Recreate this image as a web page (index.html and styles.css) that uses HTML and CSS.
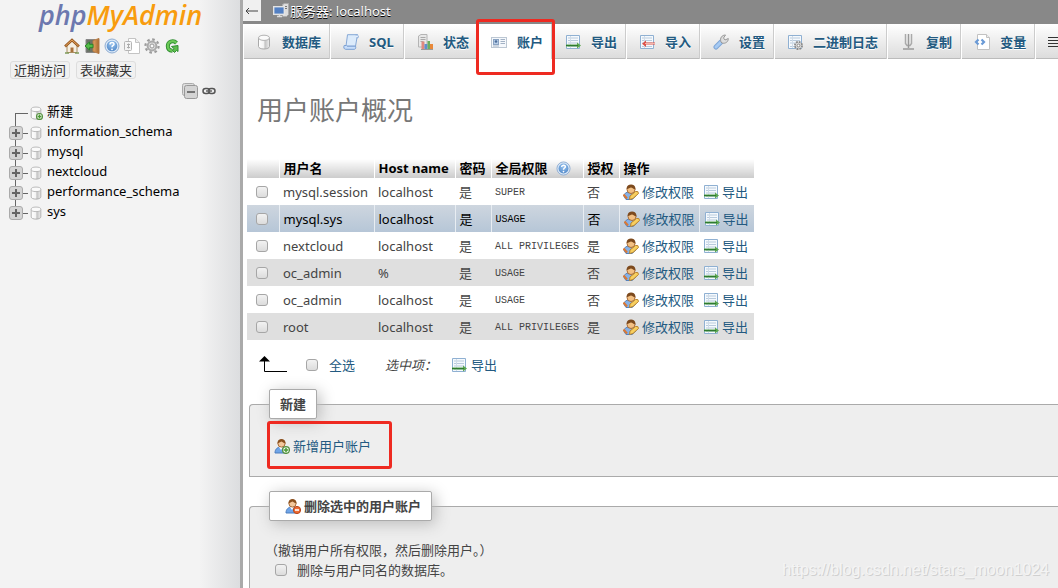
FILE: index.html
```html
<!DOCTYPE html>
<html lang="zh-CN">
<head>
<meta charset="utf-8">
<title>localhost | phpMyAdmin</title>
<link rel="stylesheet" href="styles.css">
</head>
<body>
<svg class="sprite" aria-hidden="true">
  <defs>
    <linearGradient id="cyl" x1="0" x2="1" y1="0" y2="0"><stop offset="0" stop-color="#fff"/><stop offset=".45" stop-color="#f4f4f4"/><stop offset=".6" stop-color="#c4c4c4"/><stop offset="1" stop-color="#eee"/></linearGradient>
    <linearGradient id="wood" x1="0" x2="1" y1="0" y2="0"><stop offset="0" stop-color="#e2a565"/><stop offset="1" stop-color="#a8682f"/></linearGradient>
    <radialGradient id="ball" cx=".5" cy=".3" r=".8"><stop offset="0" stop-color="#9cc6f0"/><stop offset="1" stop-color="#4a82c4"/></radialGradient>
  </defs>
  <symbol id="db" viewBox="0 0 16 16">
    <path d="M2.500 4v8.500c0 1.400 2.400 2.500 5.500 2.500s5.500-1.100 5.500-2.500V4z" fill="url(#cyl)" stroke="#aaa"/>
    <ellipse cx="8" cy="3.800" rx="5.500" ry="2.600" fill="#fafafa" stroke="#b2b2b2"/>
  </symbol>
  <symbol id="add" viewBox="0 0 16 16">
    <circle cx="12" cy="12" r="3.400" fill="#f2faee" stroke="#55903f" stroke-width="1.300"/><path d="M12 9.800v4.400M9.800 12h4.400" stroke="#4b9a35" stroke-width="1.500"/>
  </symbol>
  <symbol id="home" viewBox="0 0 16 16">
    <path d="M3 8v6.500h10V8L8 3z" fill="#f5efe2" stroke="#a98c60"/>
    <path d="M1 8.500 8 2l7 6.500" fill="none" stroke="#9b5c24" stroke-width="2.600"/><path d="M1.500 8 8 2l6.500 6" fill="none" stroke="#e3a45d"/>
    <path d="M6.500 14V9.500h3V14" fill="#a8713c"/><path d="M1 15h4M11 15h4" stroke="#7d9b5a" stroke-width="1.500"/>
  </symbol>
  <symbol id="exit" viewBox="0 0 16 16">
    <path d="M2 1.500h9v13H2z" fill="#6b7268" stroke="#888"/><path d="M9 2.500 15 .5v15l-6-2z" fill="url(#wood)" stroke="#b37a45"/>
    <path d="M1 8l4.500-4v2.300H9v3.400H5.500V12z" fill="#54bd48" stroke="#2b842a"/>
  </symbol>
  <symbol id="help" viewBox="0 0 16 16">
    <circle cx="8" cy="8" r="7" fill="#dce9f7" stroke="#8fadd2"/><circle cx="8" cy="8" r="5.300" fill="url(#ball)"/>
    <path d="M6 6.500c0-2.500 4-2.500 4-.3C10 7.500 8 7.500 8 9.200" fill="none" stroke="#fff" stroke-width="1.500"/><circle cx="8" cy="11.300" r=".9" fill="#fff"/>
  </symbol>
  <symbol id="doc" viewBox="0 0 16 16">
    <path d="M4.500.5h7l4 4v11h-11z" fill="#fff" stroke="#c4c4c4"/><path d="M11.500.5v4h4" fill="#eee" stroke="#c4c4c4"/>
    <rect x=".5" y="3.500" width="7" height="9" rx="1" fill="#f4f4f4" stroke="#b5b5b5"/><path d="M4.500 5.500v5M3 6.500h3M3 9.500h3" stroke="#aaa"/>
  </symbol>
  <symbol id="gear" viewBox="0 0 16 16">
    <circle cx="8" cy="8" r="6.600" fill="none" stroke="#9b9b9b" stroke-width="2.200" stroke-dasharray="2.600 2.580"/>
    <circle cx="8" cy="8" r="4.400" fill="#ddd" stroke="#aaa" stroke-width="2"/><circle cx="8" cy="8" r="2" fill="#fafafa" stroke="#999"/>
  </symbol>
  <symbol id="reload" viewBox="0 0 16 16">
    <path d="M12.500 5C9 1.500 3.800 3.700 3.800 8c0 3.200 2.200 4.600 4.700 4.800" fill="none" stroke="#2f8d31" stroke-width="4"/>
    <path d="M12.500 5C9 1.500 3.800 3.700 3.800 8c0 3.200 2.200 4.600 4.700 4.800" fill="none" stroke="#6bc956" stroke-width="2.200"/>
    <path d="M14 7.500 7.500 8.500l2.500 2-1.500 2 2 2 2-2 1.500 1z" fill="#5dbd4e" stroke="#2f8d31"/>
  </symbol>
  <symbol id="collapse" viewBox="0 0 16 16">
    <rect x=".5" y=".5" width="12" height="12" rx="2" fill="#ddd" stroke="#aaa"/><rect x="2.500" y="2.500" width="13" height="13" rx="2" fill="#d4d4d4" stroke="#999"/><path d="M5 9h8" stroke="#555" stroke-width="1.500"/>
  </symbol>
  <symbol id="chain" viewBox="0 0 16 16">
    <rect x="2" y="5.500" width="6.500" height="5" rx="2.500" fill="none" stroke="#555" stroke-width="1.500"/><rect x="7.500" y="5.500" width="6.500" height="5" rx="2.500" fill="none" stroke="#555" stroke-width="1.500"/><path d="M5 8h6" stroke="#666" stroke-width="1.500"/>
  </symbol>
  <symbol id="plus" viewBox="0 0 14 14">
    <rect x=".5" y=".5" width="13" height="13" rx="2.500" fill="#d4d4d4" stroke="#aaa"/><path d="M7 3v8M3 7h8" stroke="#666" stroke-width="2"/>
  </symbol>
  <symbol id="server" viewBox="0 0 16 16">
    <path d="M9.500 1.500l2-1h4v11l-2 2h-4z" fill="#ddd" stroke="#aaa"/><path d="M11 3.500h3M11 5.500h3" stroke="#777"/>
    <rect x=".7" y="3.700" width="10.600" height="7.600" fill="#5380c3" stroke="#e3e3e3" stroke-width="1.400"/><path d="M4 13.500h5M6.500 11v3" stroke="#ddd" stroke-width="1.500"/>
  </symbol>
  <symbol id="sql" viewBox="0 0 16 16">
    <path d="M4.500.7h10l-2 11.500H3z" fill="#dcebfb" stroke="#86a8d6"/><path d="M3.500 11.500H1.200c-1 2 0 3.800 1.500 3.800h8.600c1.300 0 1.800-1.600 1.200-3.100H4" fill="#c8defa" stroke="#7a9fd2"/>
    <path d="M12.500 1h2c1.200.6 1 2.300.5 2.800h-1.500" fill="#eaf3ff" stroke="#86a8d6"/>
  </symbol>
  <symbol id="status" viewBox="0 0 16 16">
    <path d="M1.500 2 4 .5h6V13H1.500z" fill="#e8e8e8" stroke="#b4b4b4"/><path d="M3.500 3.500h5M3.500 5.500h5M3.500 7.500h3" stroke="#aaa"/>
    <path d="M4.500 7.500h3V15h-3z" fill="#e0887f"/><path d="M7.500 10h3v5h-3z" fill="#5f8fd0"/><path d="M10.500 7h2.500v8h-2.500z" fill="#6cae62"/><path d="M13 10h3v5h-3z" fill="#e8893a"/><path d="M4 15.500h12" stroke="#999"/>
  </symbol>
  <symbol id="card" viewBox="0 0 16 16">
    <rect x=".5" y="3.500" width="15" height="10" fill="#f5f8fc" stroke="#bcc7d3"/><rect x="2.500" y="5.500" width="5" height="5" fill="#b9cee8" stroke="#8aa3c2"/><circle cx="5" cy="7.500" r="1.300" fill="#4c6d99"/><path d="M9.500 5.500H14M9.500 7.500H14M9.500 9.500H14M2 12h6" stroke="#a3b2c5"/>
  </symbol>
  <symbol id="sheet" viewBox="0 0 16 16">
    <path d="M1.500 1.500h13v13h-13z" fill="#f5f9fd" stroke="#8fb0d2"/><path d="M3 4h10M3 6.500h10M3 9h10M3 12.500h10" stroke="#b9cbdd"/><path d="M5.500 2v12" stroke="#d0dce8"/>
  </symbol>
  <symbol id="export" viewBox="0 0 16 16">
    <use href="#sheet"/><path d="M1 10.500h11V8.500l4 3-4 3v-2H1z" fill="#5aa64f"/><path d="M1 11.500h12" stroke="#2f7a30"/>
  </symbol>
  <symbol id="import" viewBox="0 0 16 16">
    <use href="#sheet"/><path d="M16 8.500H7V6.500L3 9.700l4 3.200v-2.400h9z" fill="#dc5148"/><path d="M6 9.500h10" stroke="#f6b4a9"/>
  </symbol>
  <symbol id="wrench" viewBox="0 0 16 16">
    <path d="M3 13 8 8" stroke="#7ea5d6" stroke-width="5" stroke-linecap="round"/><path d="M3 13 8 8" stroke="#a6caf3" stroke-width="3" stroke-linecap="round"/>
    <path d="M8 8C6.500 4 9 1 12.500 1l-2 3L12 6l3.300-1.500C15.500 8 12 10 9 9z" fill="#ddd" stroke="#999"/>
  </symbol>
  <symbol id="binlog" viewBox="0 0 16 16">
    <use href="#sheet"/><circle cx="11.500" cy="11.500" r="3.600" fill="#ddd" stroke="#888" stroke-width="1.800" stroke-dasharray="1.800 1"/><circle cx="11.500" cy="11.500" r="1.400" fill="#fff" stroke="#888"/>
  </symbol>
  <symbol id="repl" viewBox="0 0 16 16">
    <path d="M5.500 0v9.500l1.500 2h3l1.500-2V0" fill="none" stroke="#aaa" stroke-width="1.500"/><path d="M8.500 0v14" stroke="#999" stroke-width="1.500"/><path d="M3 15h11" stroke="#999" stroke-width="1.500"/>
  </symbol>
  <symbol id="vars" viewBox="0 0 16 16">
    <path d="M3.500.5h9l3 3v12h-12z" fill="#fff" stroke="#c2c2c2"/><path d="M12.500.5v3h3" fill="#eee" stroke="#c2c2c2"/><path d="M4.500 5.500 2 8l2.500 2.500M7.500 5.500 10 8l-2.500 2.500" fill="none" stroke="#6a9ad6" stroke-width="2.200"/>
  </symbol>
  <symbol id="charset" viewBox="0 0 16 16"><path d="M0 3.500h15M0 6.500h15M0 9.500h15M0 12.500h15" stroke="#333"/></symbol>
  <symbol id="user" viewBox="0 0 16 16">
    <path d="M1 15c0-4 2.500-6 6-6s6 2 6 6z" fill="#6fa5e8" stroke="#4c7cbd"/><path d="M5 9l2 3 2-3z" fill="#fff"/>
    <circle cx="7.500" cy="5.500" r="3.600" fill="#f3c79b" stroke="#a96c37"/><path d="M3.500 5.500C3-.5 12-.5 11.500 5.500 9 5 8 3.500 7.500 3.500S5 5 3.500 5.500z" fill="#8b501e"/>
  </symbol>
  <symbol id="useredit" viewBox="0 0 16 16">
    <path d="M1 12.500C1 9.500 3 8 6 8s6 1 7 4l-4 3.500H3z" fill="#86b1e6" stroke="#5683bd"/>
    <circle cx="8" cy="5.500" r="4" fill="#f3c083" stroke="#a96c37"/><path d="M3.500 5C3.500-1 13-1 12.500 5.500 10 5 9 3.500 8 3.500S5.500 5 3.500 5z" fill="#7d4a1e"/>
    <path d="M6.500 15.500l.5-3.500 5.500-4.500q3-1 3 2L10 14.500z" fill="#f8cf5e" stroke="#b9832f"/><path d="M.5 10.500l3.500 4" stroke="#d97835" stroke-width="2"/>
  </symbol>
  <symbol id="useradd" viewBox="0 0 16 16"><use href="#user"/><use href="#add"/></symbol>
  <symbol id="userdel" viewBox="0 0 16 16"><use href="#user"/><circle cx="12" cy="12" r="3.600" fill="#ed6c36" stroke="#b94518"/><path d="M10 12h4" stroke="#fff" stroke-width="1.600"/></symbol>
</svg>

<div class="shell">
  <aside class="nav">
    <a class="logo" href="#"><span class="logo-php">php</span><span class="logo-my">MyAdmin</span></a>
    <div class="quick">
      <a href="#" aria-label="主页"><svg class="icon"><use href="#home"/></svg></a>
      <a href="#" aria-label="退出"><svg class="icon"><use href="#exit"/></svg></a>
      <a href="#" aria-label="文档"><svg class="icon"><use href="#help"/></svg></a>
      <a href="#" aria-label="手册"><svg class="icon"><use href="#doc"/></svg></a>
      <a href="#" aria-label="设置"><svg class="icon"><use href="#gear"/></svg></a>
      <a href="#" aria-label="刷新"><svg class="icon"><use href="#reload"/></svg></a>
    </div>
    <div class="recent">
      <button type="button">近期访问</button>
      <button type="button">表收藏夹</button>
    </div>
    <div class="tree-tools">
      <a href="#" aria-label="全部折叠"><svg class="icon"><use href="#collapse"/></svg></a>
      <a href="#" aria-label="链接"><svg class="icon"><use href="#chain"/></svg></a>
    </div>
    <ul class="tree">
      <li class="first"><span class="node"></span><svg class="icon"><use href="#db"/><use href="#add"/></svg><a href="#">新建</a></li>
      <li><span class="node"><svg class="plus"><use href="#plus"/></svg></span><svg class="icon"><use href="#db"/></svg><a href="#">information_schema</a></li>
      <li><span class="node"><svg class="plus"><use href="#plus"/></svg></span><svg class="icon"><use href="#db"/></svg><a href="#">mysql</a></li>
      <li><span class="node"><svg class="plus"><use href="#plus"/></svg></span><svg class="icon"><use href="#db"/></svg><a href="#">nextcloud</a></li>
      <li><span class="node"><svg class="plus"><use href="#plus"/></svg></span><svg class="icon"><use href="#db"/></svg><a href="#">performance_schema</a></li>
      <li><span class="node"><svg class="plus"><use href="#plus"/></svg></span><svg class="icon"><use href="#db"/></svg><a href="#">sys</a></li>
    </ul>
  </aside>

  <main class="main">
    <header class="server">
      <button class="toggle" type="button" aria-label="隐藏面板"><svg class="back" viewBox="0 0 14 8"><path d="M1 4h12M4 1 1 4l3 3" fill="none" stroke="#444"/></svg></button>
      <a href="#"><svg class="icon"><use href="#server"/></svg>服务器: localhost</a>
    </header>
    <nav class="tabs">
      <a href="#"><svg class="icon"><use href="#db"/></svg>数据库</a>
      <a href="#"><svg class="icon"><use href="#sql"/></svg>SQL</a>
      <a href="#"><svg class="icon"><use href="#status"/></svg>状态</a>
      <a href="#" class="active"><svg class="icon"><use href="#card"/></svg>账户<span class="mark mark-tab"></span></a>
      <a href="#"><svg class="icon"><use href="#export"/></svg>导出</a>
      <a href="#"><svg class="icon"><use href="#import"/></svg>导入</a>
      <a href="#"><svg class="icon"><use href="#wrench"/></svg>设置</a>
      <a href="#"><svg class="icon"><use href="#binlog"/></svg>二进制日志</a>
      <a href="#"><svg class="icon"><use href="#repl"/></svg>复制</a>
      <a href="#"><svg class="icon"><use href="#vars"/></svg>变量</a>
      <a href="#" aria-label="字符集"><svg class="icon"><use href="#charset"/></svg></a>
    </nav>

    <div class="content">
      <h2>用户账户概况</h2>
      <table class="users">
        <colgroup><col class="c-check"><col class="c-user"><col class="c-host"><col class="c-short"><col class="c-priv"><col class="c-short"><col class="c-edit"><col class="c-export"></colgroup>
        <thead>
          <tr><th></th><th>用户名</th><th>Host name</th><th>密码</th><th><span class="with-help">全局权限<svg class="icon"><use href="#help"/></svg></span></th><th>授权</th><th colspan="2">操作</th></tr>
        </thead>
        <tbody>
          <tr><td><input type="checkbox" aria-label="mysql.session"></td><td>mysql.session</td><td>localhost</td><td>是</td><td><code>SUPER</code></td><td>否</td><td><a href="#"><svg class="icon"><use href="#useredit"/></svg>修改权限</a></td><td><a href="#"><svg class="icon"><use href="#export"/></svg>导出</a></td></tr>
          <tr class="hover"><td><input type="checkbox" aria-label="mysql.sys"></td><td>mysql.sys</td><td>localhost</td><td>是</td><td><code>USAGE</code></td><td>否</td><td><a href="#"><svg class="icon"><use href="#useredit"/></svg>修改权限</a></td><td><a href="#"><svg class="icon"><use href="#export"/></svg>导出</a></td></tr>
          <tr><td><input type="checkbox" aria-label="nextcloud"></td><td>nextcloud</td><td>localhost</td><td>是</td><td><code>ALL PRIVILEGES</code></td><td>是</td><td><a href="#"><svg class="icon"><use href="#useredit"/></svg>修改权限</a></td><td><a href="#"><svg class="icon"><use href="#export"/></svg>导出</a></td></tr>
          <tr class="even"><td><input type="checkbox" aria-label="oc_admin %"></td><td>oc_admin</td><td>%</td><td>是</td><td><code>USAGE</code></td><td>否</td><td><a href="#"><svg class="icon"><use href="#useredit"/></svg>修改权限</a></td><td><a href="#"><svg class="icon"><use href="#export"/></svg>导出</a></td></tr>
          <tr><td><input type="checkbox" aria-label="oc_admin localhost"></td><td>oc_admin</td><td>localhost</td><td>是</td><td><code>USAGE</code></td><td>否</td><td><a href="#"><svg class="icon"><use href="#useredit"/></svg>修改权限</a></td><td><a href="#"><svg class="icon"><use href="#export"/></svg>导出</a></td></tr>
          <tr class="even"><td><input type="checkbox" aria-label="root"></td><td>root</td><td>localhost</td><td>是</td><td><code>ALL PRIVILEGES</code></td><td>是</td><td><a href="#"><svg class="icon"><use href="#useredit"/></svg>修改权限</a></td><td><a href="#"><svg class="icon"><use href="#export"/></svg>导出</a></td></tr>
        </tbody>
      </table>

      <div class="bulk">
        <svg class="arrow" viewBox="0 0 28 18"><path d="M5.500 3v12.500H28" fill="none" stroke="#000"/><path d="M0 5.500 5.500 0 11 5.500z"/></svg>
        <input type="checkbox" id="all"><label for="all">全选</label>
        <em>选中项：</em>
        <button type="button"><svg class="icon"><use href="#export"/></svg>导出</button>
      </div>

      <fieldset class="box box-new">
        <legend>新建</legend>
        <a class="add-link" href="#"><svg class="icon"><use href="#useradd"/></svg>新增用户账户<span class="mark mark-add"></span></a>
      </fieldset>

      <fieldset class="box box-drop">
        <legend class="with-icon"><svg class="icon"><use href="#userdel"/></svg>删除选中的用户账户</legend>
        <p>（撤销用户所有权限，然后删除用户。）</p>
        <div class="drop-db"><input type="checkbox" id="dropdb"><label for="dropdb">删除与用户同名的数据库。</label></div>
      </fieldset>
    </div>
  </main>
  <span class="watermark">https://blog.csdn.net/stars_moon1024</span>
</div>
</body>
</html>
```

FILE: styles.css
```css
* { box-sizing: border-box; }
body {
  margin: 0;
  font: 13px/20px "Noto Sans", "Noto Sans CJK SC", sans-serif;
  color: #444;
  background: #fff;
}
a { color: #235a81; text-decoration: none; }
button { font: inherit; cursor: pointer; }
.sprite { position: absolute; width: 0; height: 0; }
.icon { display: block; flex: none; width: 16px; height: 16px; }
.shell { position: relative; display: flex; height: 100vh; overflow: hidden; }

input[type="checkbox"] {
  appearance: none;
  display: block;
  flex: none;
  width: 12px;
  height: 12px;
  margin: 0;
  border: 1px solid #a6a6a6;
  border-radius: 3px;
  background: linear-gradient(#f2f2f2, #dcdcdc);
}

/* navigation panel */
.nav {
  flex: none;
  width: 243px;
  border-right: 3px solid #aaa;
  background: linear-gradient(to right, #f3f3f3 200px, #dcdddf 240px);
}
.logo {
  display: block;
  height: 38px;
  padding-left: 39px;
  font: italic 600 27px/30px "Open Sans", sans-serif;
}
.logo-php { color: #6c78af; }
.logo-my { color: #f89c0e; }
.quick { display: flex; gap: 4px; padding-left: 64px; }
.recent { display: flex; gap: 6px; padding: 7px 0 0 10px; }
.recent button {
  height: 18px;
  padding: 0 3px;
  border: 1px solid #ddd;
  border-radius: 3px;
  background: #f1f1f1;
  color: #333;
  line-height: 16px;
}
.tree-tools { display: flex; gap: 3px; padding: 4px 0 0 182px; }
.tree { margin: 0; padding: 2px 0 0 9px; list-style: none; }
.tree li { display: flex; height: 20px; align-items: center; }
.tree .icon { margin: 3px 3px 0 0; width: 16px; height: 14px; }
.tree a { color: #000; }
.node {
  display: flex;
  align-items: center;
  width: 19px;
  height: 20px;
  margin-top: 4px;
  background:
    linear-gradient(#666, #666) 6px 0 / 1px 100% no-repeat,
    linear-gradient(#666, #666) 6px 10px / 13px 1px no-repeat;
}
.first .node { background-position: 6px 10px, 6px 10px; }
.tree li:last-child .node { background-size: 1px 10px, 13px 1px; }
.plus { width: 14px; height: 14px; }

/* server bar and tabs */
.main { flex: 1; min-width: 0; }
.server {
  display: flex;
  gap: 12px;
  height: 24px;
  background: #888;
}
.toggle {
  display: flex;
  align-items: center;
  justify-content: center;
  width: 18px;
  height: 21px;
  padding: 0;
  border: 0;
  background: #f0f0f0;
}
.back { width: 14px; height: 8px; }
.server a {
  display: flex;
  align-items: center;
  gap: 1px;
  height: 22px;
  color: #fff;
  text-shadow: 0 1px 0 #000;
}
.tabs {
  display: flex;
  height: 35px;
  border-bottom: 1px solid #bbb;
  background: linear-gradient(#fff, #dcdcdc);
}
.tabs a {
  position: relative;
  display: flex;
  flex: none;
  align-items: center;
  gap: 10px;
  min-width: 74px;
  height: 35px;
  padding: 0 8px 0 12px;
  border-left: 1px solid #fff;
  border-right: 1px solid #ccc;
  font-weight: 700;
  text-shadow: 0 1px 0 #fff;
}
.tabs .active { background: #fff; }
.mark {
  position: absolute;
  border: 3px solid #ee2a21;
  border-radius: 3px;
}
.mark-tab { z-index: 1; inset: -5px -4px -16px -3px; }

/* content */
.content { padding: 0 0 0 4px; }
h2 {
  margin: 0;
  padding: 32px 0 0 10px;
  font-size: 26px;
  font-weight: 400;
  line-height: 38px;
  color: #777;
}
.users {
  width: 507px;
  margin-top: 30px;
  border-collapse: collapse;
  table-layout: fixed;
}
.c-check { width: 32px; }
.c-user { width: 95px; }
.c-host { width: 81px; }
.c-short { width: 36px; }
.c-priv { width: 92px; }
.c-edit { width: 80px; }
.c-export { width: 55px; }
.users th {
  height: 19px;
  padding: 0 4px;
  background: linear-gradient(#fff, #ccc);
  color: #000;
  line-height: 19px;
  text-align: left;
  white-space: nowrap;
}
.users td { height: 27px; padding: 0 4px; white-space: nowrap; }
.users th + th { border-left: 1px solid #fff; }
.users .hover td + td { border-left: 1px solid #e8edf2; }
.users td:first-child { padding-left: 9px; }
.users a { display: flex; align-items: center; gap: 3px; }
.with-help { display: flex; align-items: center; gap: 8px; }
.with-help .icon { width: 15px; height: 15px; }
.even { background: #dfdfdf; }
.hover { background: linear-gradient(#ced6df, #b6c6d7); color: #000; }
code { font: 10px/20px "Liberation Mono", monospace; }

.bulk {
  display: flex;
  align-items: center;
  height: 20px;
  margin-top: 15px;
  padding-left: 12px;
}
.arrow { width: 28px; height: 18px; margin-right: 19px; }
.bulk label { margin: 0 30px 0 11px; color: #235a81; }
.bulk button {
  display: flex;
  align-items: center;
  gap: 4px;
  margin-left: 14px;
  padding: 0;
  border: 0;
  background: none;
  color: #235a81;
}

.box {
  min-width: 0;
  margin: 14px 0 0 2px;
  padding: 0 0 0 24px;
  border: 1px solid #aaa;
  border-right: 0;
  border-radius: 4px 0 0 0;
  background: #eee;
}
.box legend {
  height: 30px;
  margin-left: -5px;
  padding: 4px 10px;
  border: 1px solid #aaa;
  border-radius: 2px;
  background: #fff;
  box-shadow: 3px 3px 15px #bbb;
  font-weight: 700;
}
.box-new { padding-bottom: 17px; }
.add-link {
  position: relative;
  display: inline-flex;
  align-items: center;
  gap: 3px;
  margin-top: 17px;
}
.mark-add { inset: -15px -21px -13px -7px; }
.box .with-icon { display: flex; align-items: center; gap: 3px; padding-left: 15px; }
.box-drop { padding: 0 0 40px 15px; }
.box-drop legend { margin-left: 4px; }
.box-drop p { margin: 19px 0 0; }
.drop-db { display: flex; align-items: center; gap: 10px; padding-left: 10px; }

.watermark {
  position: absolute;
  right: 9px;
  bottom: 8px;
  font: 16px/20px "Liberation Sans", sans-serif;
  color: #f4f4f4;
  text-shadow: 1px 1px 0 #d0d0d0;
}
```
